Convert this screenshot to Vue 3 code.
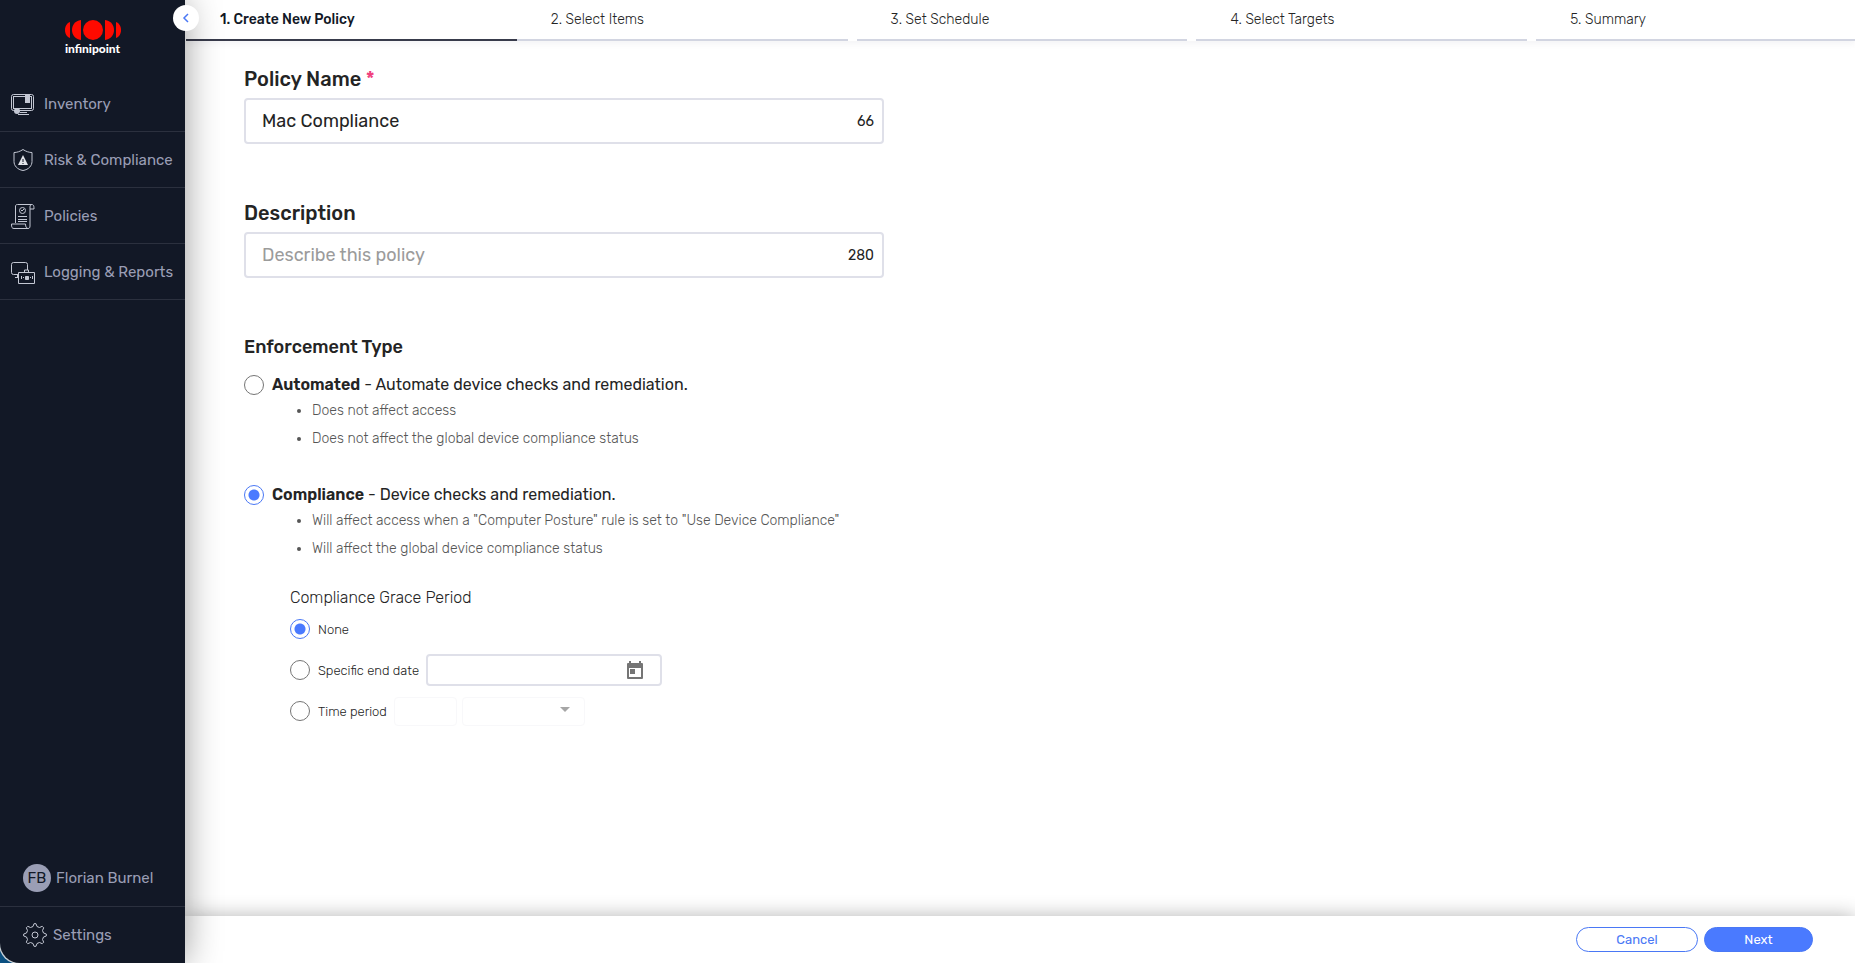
<template>
  <div class="layout">
    <aside class="sidebar">
      <a class="logo" href="#">
        <svg width="56" height="22" viewBox="0 0 56 22" aria-hidden="true">
          <g fill="#ff0a00">
            <path d="M5 3v16C2 18 0 15 0 11s2-7 5-8z" />
            <path d="M16 1v20C10 20 7 16 7 11s3-9 9-10z" />
            <circle cx="28" cy="11" r="10" />
            <path d="M40 1v20c6-1 9-5 9-10s-3-9-9-10z" />
            <path d="M51 3v16c3-1 5-4 5-8s-2-7-5-8z" />
          </g>
        </svg>
        <span>infinipoint</span>
      </a>

      <nav class="menu">
        <a v-for="item in menu" :key="item.icon" class="menu-item" href="#">
          <svg
            class="menu-icon"
            width="26"
            height="26"
            viewBox="0 0 26 26"
            fill="none"
            stroke="#c3c7d3"
            aria-hidden="true"
          >
            <template v-if="item.icon === 'inventory'">
              <rect x="1.5" y="3.5" width="22" height="16" rx="2" />
              <rect x="3.5" y="5.5" width="18" height="12" />
              <path d="M10 21.5h7M8 23.5h11" />
              <path d="M15 4h5v8h-5z" fill="#c3c7d3" stroke="none" />
              <circle cx="7" cy="20" r="3" fill="#c3c7d3" stroke="none" />
            </template>
            <template v-else-if="item.icon === 'risk'">
              <path d="M13 2.5c3 2 6 3 9 3v9c0 4-3 8-9 9-6-1-9-5-9-9v-9c3 0 6-1 9-3z" />
              <path d="M13 8l5 10H8z" fill="#e2e4ea" stroke="none" />
              <path d="M13 12v3M13 16v1" stroke="#121826" />
            </template>
            <template v-else-if="item.icon === 'policies'">
              <path d="M5.500 20V3c0-1 1-1.500 2-1.500h14c2 0 2.500 1 2.500 4.500h-4v17c0 2-1 2.500-2 2.500" />
              <path d="M20 6V4c0-1.500.5-2.500 2-2.500" />
              <path d="M18 25.500H4c-2 0-2.500-1-2.500-4.500h14c0 3 1 4.500 3 4.500" />
              <circle cx="12.500" cy="7.500" r="3" />
              <path d="M11 7l1 1 2-2M8 13.500h9M8 16.500h9M8 18.500h9" />
            </template>
            <template v-else>
              <path d="M8 15.500H3.500a2 2 0 0 1-2-2v-8a2 2 0 0 1 2-2h12a2 2 0 0 1 2 2V11M5 18.500h3M7.500 16v2" />
              <path d="M14.500 13v-2h4v2M8.500 13.500h16v11h-16z" />
              <path d="M11.500 17v3M13.500 18v1M20.500 18v1M22.500 17v3" />
              <path d="M15.500 17.500h3v3h-3z" fill="#c3c7d3" />
            </template>
          </svg>
          {{ item.label }}
        </a>
      </nav>

      <div class="account">
        <a class="user" href="#"><span class="avatar">FB</span>Florian Burnel</a>
        <a class="settings" href="#">
          <svg width="24" height="24" viewBox="0 0 24 24" fill="none" stroke="#c3c7d3" aria-hidden="true">
            <path
              d="M10 3.500 11 .7h2l1 2.800 2.500 1L19.200 3.300l1.500 1.500L19.500 7.500l1 2.500 2.800 1v2l-2.800 1-1 2.500 1.200 2.700-1.500 1.500-2.700-1.200-2.500 1-1 2.800h-2l-1-2.800-2.500-1-2.700 1.200-1.500-1.500 1.200-2.700-1-2.500-2.800-1v-2l2.800-1 1-2.500-1.200-2.700 1.500-1.500 2.700 1.200z"
              stroke-linejoin="round"
            />
            <circle cx="12" cy="12" r="3" />
          </svg>
          Settings
        </a>
      </div>

      <button class="collapse" type="button" aria-label="Collapse menu">
        <svg width="8" height="10" viewBox="0 0 8 10" fill="none" stroke="#4a78f5" stroke-width="1.500">
          <path d="M6 1 2 5l4 4" />
        </svg>
      </button>
    </aside>

    <main class="content">
      <ol class="steps">
        <li v-for="(step, index) in steps" :key="step" class="step" :class="{ active: index === 0 }">
          {{ index + 1 }}. {{ step }}
        </li>
      </ol>

      <form class="policy" @submit.prevent>
        <div class="field">
          <label for="policy-name">Policy Name <span class="required">*</span></label>
          <div class="text-box">
            <input id="policy-name" v-model="name" type="text" maxlength="80" />
            <span>{{ 80 - name.length }}</span>
          </div>
        </div>

        <div class="field">
          <label for="policy-description">Description</label>
          <div class="text-box">
            <input
              id="policy-description"
              v-model="description"
              type="text"
              maxlength="280"
              placeholder="Describe this policy"
            />
            <span>{{ 280 - description.length }}</span>
          </div>
        </div>

        <h2>Enforcement Type</h2>
        <div class="types">
          <div v-for="type in types" :key="type.value">
            <label class="type-label">
              <input v-model="enforcement" type="radio" name="enforcement" :value="type.value" />
              <span><strong>{{ type.title }}</strong> - {{ type.text }}</span>
            </label>
            <ul>
              <li v-for="note in type.notes" :key="note">{{ note }}</li>
            </ul>
          </div>
        </div>

        <div class="grace">
          <h3>Compliance Grace Period</h3>
          <div class="grace-row">
            <label><input v-model="grace" type="radio" name="grace" value="none" />None</label>
          </div>
          <div class="grace-row">
            <label><input v-model="grace" type="radio" name="grace" value="date" />Specific end date</label>
            <div class="date-box">
              <input v-model="endDate" type="text" aria-label="End date" />
              <button type="button" aria-label="Open calendar">
                <svg width="16" height="18" viewBox="0 0 16 18" fill="#757575">
                  <path d="M0 3q0-1 1-1h1V0h2v2h8V0h2v2h1q1 0 1 1v14q0 1-1 1H1q-1 0-1-1zM2 7v9h12V7zM3 8h5v5H3z" fill-rule="evenodd" />
                </svg>
              </button>
            </div>
          </div>
          <div class="grace-row">
            <label><input v-model="grace" type="radio" name="grace" value="period" />Time period</label>
            <div class="period">
              <input type="text" aria-label="Period length" disabled />
              <div class="unit">
                <select aria-label="Period unit" disabled></select>
                <svg width="10" height="5" viewBox="0 0 10 5" fill="#a6a6a6"><path d="M0 0h10L5 5z" /></svg>
              </div>
            </div>
          </div>
        </div>
      </form>

      <footer class="actions">
        <button class="cancel" type="button">Cancel</button>
        <button class="next" type="button">Next</button>
      </footer>
    </main>
  </div>
</template>

<script setup>
import { ref } from "vue";

const menu = [
  { icon: "inventory", label: "Inventory" },
  { icon: "risk", label: "Risk & Compliance" },
  { icon: "policies", label: "Policies" },
  { icon: "logging", label: "Logging & Reports" },
];

const steps = ["Create New Policy", "Select Items", "Set Schedule", "Select Targets", "Summary"];

const types = [
  {
    value: "automated",
    title: "Automated",
    text: "Automate device checks and remediation.",
    notes: ["Does not affect access", "Does not affect the global device compliance status"],
  },
  {
    value: "compliance",
    title: "Compliance",
    text: "Device checks and remediation.",
    notes: [
      'Will affect access when a "Computer Posture" rule is set to "Use Device Compliance"',
      "Will affect the global device compliance status",
    ],
  },
];

const name = ref("Mac Compliance");
const description = ref("");
const enforcement = ref("compliance");
const grace = ref("none");
const endDate = ref("");
</script>

<style>
body {
  margin: 0;
  background: #0d5a91;
}
</style>

<style scoped>
* {
  box-sizing: border-box;
}

.layout {
  display: flex;
  min-height: 100vh;
  font-family: Rubik, Roboto, sans-serif;
  color: #242424;
}

input,
select,
button {
  font: inherit;
  color: inherit;
}

a {
  color: #9a9eb5;
  text-decoration: none;
}

.sidebar {
  position: relative;
  z-index: 2;
  display: flex;
  flex-direction: column;
  flex: none;
  width: 185px;
  background: #121826;
  border-bottom-left-radius: 20px;
  box-shadow: 0 0 36px rgba(0, 0, 0, 0.4), -1px 1px 0 #e8f2fa;
  font-size: 15px;
}

.logo {
  display: flex;
  flex-direction: column;
  align-items: center;
  height: 76px;
  padding-top: 19px;
  color: #fff;
  font-family: Lato, sans-serif;
  font-size: 12px;
  line-height: 16px;
  font-weight: 900;
}

.menu-item {
  display: flex;
  align-items: center;
  gap: 8px;
  height: 56px;
  padding-left: 10px;
  border-bottom: 1px solid #2b303e;
  white-space: nowrap;
}

.account {
  margin-top: auto;
}

.user,
.settings {
  display: flex;
  align-items: center;
  height: 57px;
  padding-left: 23px;
}

.user {
  gap: 5px;
  border-bottom: 1px solid #2b303e;
}

.settings {
  gap: 6px;
  height: 56px;
}

.avatar {
  width: 28px;
  height: 28px;
  border-radius: 50%;
  background: #9a9eb5;
  color: #121826;
  line-height: 28px;
  text-align: center;
}

.collapse {
  position: absolute;
  top: 5px;
  right: -14px;
  display: flex;
  align-items: center;
  justify-content: center;
  width: 26px;
  height: 26px;
  padding: 0;
  border: 0;
  border-radius: 50%;
  background: #fff;
}

.content {
  display: flex;
  flex-direction: column;
  flex: 1;
  min-width: 0;
  overflow: hidden;
  background: #fff;
}

.steps {
  display: flex;
  gap: 9px;
  margin: 0;
  padding: 0 0 0 1px;
  list-style: none;
  font-size: 14px;
  font-weight: 300;
  box-shadow: 0 3px 6px rgba(60, 70, 110, 0.06);
}

.step {
  flex: none;
  width: calc(20% - 3px);
  height: 41px;
  padding: 0 34px;
  border-bottom: 2px solid #d2d5e1;
  line-height: 39px;
}

.step.active {
  margin-right: -9px;
  border-color: #383b4b;
  color: #121826;
  font-weight: 500;
}

.policy {
  flex: 1;
  padding: 26px 59px;
}

.field {
  max-width: 640px;
  margin-bottom: 57px;
}

.field label {
  display: block;
  margin-bottom: 7px;
  font-size: 20px;
  line-height: 24px;
  font-weight: 500;
}

.required {
  color: #f0407c;
}

.text-box {
  display: flex;
  align-items: center;
  height: 46px;
  padding: 0 8px 0 16px;
  border: 2px solid #dfe0e9;
  border-radius: 4px;
  font-size: 14px;
}

.text-box input {
  flex: 1;
  min-width: 0;
  padding: 0;
  border: 0;
  outline: 0;
  font-size: 18px;
}

.text-box input::placeholder {
  color: #9b9b9b;
}

h2 {
  margin: 0 0 14px;
  font-size: 18px;
  line-height: 24px;
  font-weight: 500;
}

input[type="radio"] {
  appearance: none;
  flex: none;
  width: 20px;
  height: 20px;
  margin: 0;
  border: 1px solid #757575;
  border-radius: 50%;
  background: #fff;
}

input[type="radio"]:checked {
  border-color: #4a78f5;
  background: radial-gradient(circle, #4a7aff 5px, #fff 6px);
}

.types {
  display: flex;
  flex-direction: column;
  gap: 30px;
}

.type-label {
  display: flex;
  align-items: center;
  gap: 8px;
  font-size: 16px;
  line-height: 24px;
}

.type-label strong {
  font-weight: 600;
}

ul {
  margin: 0;
  padding-left: 68px;
  color: #555;
  font-size: 14px;
  line-height: 28px;
  font-weight: 300;
}

.grace {
  margin-top: 23px;
  padding-left: 46px;
}

h3 {
  margin: 0 0 3px;
  font-size: 16px;
  line-height: 24px;
  font-weight: 300;
}

.grace-row {
  display: flex;
  align-items: center;
  gap: 7px;
  height: 32px;
  margin-bottom: 9px;
  font-size: 13px;
  font-weight: 300;
}

.grace-row label {
  display: flex;
  align-items: center;
  gap: 8px;
}

.date-box {
  display: flex;
  align-items: center;
  width: 236px;
  height: 32px;
  padding-right: 17px;
  border: 2px solid #dfe0e9;
  border-radius: 4px;
}

.date-box input {
  flex: 1;
  min-width: 0;
  border: 0;
  outline: 0;
}

.date-box button {
  display: flex;
  padding: 0;
  border: 0;
  background: none;
}

.period {
  display: flex;
  gap: 5px;
}

.period input,
.unit select {
  width: 63px;
  height: 29px;
  border: 1px solid #f8f8fa;
  border-radius: 4px;
  background: #fff;
}

.unit {
  position: relative;
}

.unit select {
  appearance: none;
  width: 123px;
  opacity: 1;
}

.unit svg {
  position: absolute;
  top: 10px;
  right: 15px;
}

.actions {
  display: flex;
  justify-content: flex-end;
  gap: 6px;
  height: 47px;
  padding: 11px 42px 11px 0;
  box-shadow: 0 0 20px rgba(0, 0, 0, 0.3);
  font-size: 13px;
}

.actions button {
  width: 122px;
  border: 1px solid #4a78f5;
  border-radius: 13px;
  background: #fff;
  color: #4a78f5;
}

.actions .next {
  width: 109px;
  background: #4a7aff;
  color: #fff;
}
</style>
